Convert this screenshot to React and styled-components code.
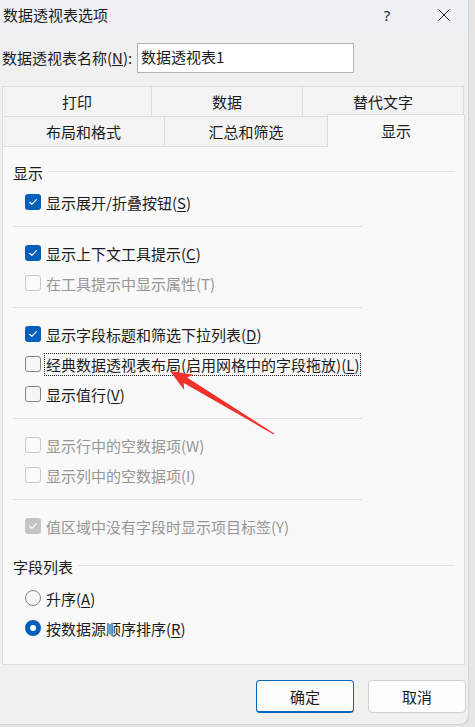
import React from "react";
import styled, { createGlobalStyle, css } from "styled-components";

const Global = createGlobalStyle`
  html, body { margin: 0; padding: 0; }
  body {
    background: #e6e6e6;
    font-family: "Noto Sans CJK SC", "Noto Sans", sans-serif;
    color: #1b1b1b;
  }
  #root { width: 475px; height: 727px; overflow: hidden; }
`;

const Window = styled.div`
  position: relative;
  width: 468px;
  height: 724px;
  background: #f0f0f0;
  border-radius: 0 0 8px 0;
  box-shadow: 0 0 2px rgba(0, 0, 0, 0.28);
  display: flex;
  flex-direction: column;
  overflow: hidden;
`;

const TitleBar = styled.div`
  height: 32px;
  background: #eef2f5;
  display: flex;
  align-items: center;
  padding-left: 3px;
  flex-shrink: 0;
`;

const Title = styled.div`
  font-size: 15px;
  line-height: 20px;
  margin-top: -2px;
`;

const Caption = styled.div`
  width: 46px;
  height: 32px;
  display: flex;
  align-items: center;
  justify-content: center;
  font-size: 15px;
  font-family: "Noto Sans", sans-serif;
  color: #222;
  margin-top: -2px;
  ${(p) => p.$first && css`margin-left: auto;`}
  ${(p) => p.$last && css`margin-left: 11px; margin-right: 1px;`}
`;

const NameRow = styled.div`
  margin-top: 11px;
  height: 30px;
  display: flex;
  align-items: center;
  padding-left: 2px;
`;

const NameLabel = styled.div`
  width: 135px;
  font-size: 15px;
  line-height: 20px;
`;

const NameInput = styled.div`
  box-sizing: border-box;
  width: 217px;
  height: 30px;
  border: 1px solid #b3b3b3;
  background: #ffffff;
  font-size: 15px;
  line-height: 26px;
  padding-left: 3px;
`;

const Tabs = styled.div`
  margin-top: 13px;
  margin-left: 2px;
  display: flex;
  flex-direction: column;
`;

const TabRow = styled.div`
  display: flex;
  height: 30px;
  align-items: flex-end;
`;

const Tab = styled.div`
  box-sizing: border-box;
  width: ${(p) => p.$w}px;
  height: 30px;
  border: 1px solid #dcdcdc;
  border-bottom: none;
  background: #f3f3f3;
  font-size: 15px;
  display: flex;
  align-items: center;
  justify-content: center;
  & + & { margin-left: -1px; }
  ${(p) =>
    p.$active &&
    css`
      height: 33px;
      margin-bottom: -1px;
      background: #f9f9f9;
      position: relative;
      z-index: 1;
      padding-bottom: 2px;
    `}
`;

const Panel = styled.div`
  box-sizing: border-box;
  margin-left: 2px;
  width: 463px;
  height: 519px;
  border: 1px solid #dcdcdc;
  background: #f9f9f9;
  padding-top: 14px;
  display: flex;
  flex-direction: column;
`;

const GroupHeader = styled.div`
  height: 22px;
  display: flex;
  align-items: center;
  padding-left: 10px;
  font-size: 15px;
  ${(p) => p.$spaced && css`margin-top: 14px;`}
  &::after {
    content: "";
    flex: 1;
    height: 1px;
    background: #e0e0e0;
    margin-left: 5px;
    margin-right: 9px;
    margin-top: -2px;
  }
`;

const Options = styled.div`
  margin-top: ${(p) => p.$top}px;
  display: flex;
  flex-direction: column;
`;

const Option = styled.div`
  height: 30px;
  display: flex;
  align-items: center;
  padding-left: 22px;
  color: ${(p) => (p.$disabled ? "#969696" : "#1b1b1b")};
`;

const Box = styled.span`
  box-sizing: border-box;
  width: 16px;
  height: 16px;
  flex-shrink: 0;
  border-radius: ${(p) => (p.$round ? "50%" : "3px")};
  display: flex;
  align-items: center;
  justify-content: center;
  ${(p) => {
    if (p.$checked && p.$disabled)
      return css`background: #c4c4c4; border: none;`;
    if (p.$checked) return css`background: #005fb8; border: none;`;
    if (p.$disabled)
      return css`background: #fbfbfb; border: 1px solid #cacaca;`;
    return css`background: #f6f6f6; border: 1px solid #858585;`;
  }}
`;

const Dot = styled.span`
  width: 6px;
  height: 6px;
  border-radius: 50%;
  background: #fff;
`;

const Text = styled.span`
  margin-left: 3px;
  padding: 0 1px;
  border: 1px dotted ${(p) => (p.$focus ? "#1b1b1b" : "transparent")};
  font-size: 15px;
  line-height: 21px;
  white-space: nowrap;
  u { text-underline-offset: 2px; text-decoration-thickness: 1px; }
`;

const Separator = styled.div`
  height: 1px;
  width: 349px;
  background: #e0e0e0;
  margin: 9px 0 11px 10px;
`;

const Footer = styled.div`
  margin-top: 15px;
  display: flex;
  justify-content: flex-end;
  gap: 14px;
  padding-right: 2px;
`;

const Button = styled.div`
  box-sizing: border-box;
  width: 98px;
  height: 33px;
  border-radius: 4px;
  background: #fdfdfd;
  font-size: 15px;
  display: flex;
  align-items: center;
  justify-content: center;
  border: 1px solid ${(p) => (p.$primary ? "#0067c0" : "#d0d0d0")};
  ${(p) => p.$primary && css`border-bottom-width: 2px; padding-top: 1px;`}
`;

const ArrowLayer = styled.svg`
  position: absolute;
  left: 0;
  top: 0;
  pointer-events: none;
`;

const Check = () => (
  <svg width="12" height="12" viewBox="0 0 12 12">
    <path
      d="M2.6 6.3 L4.9 8.4 L9.4 3.7"
      fill="none"
      stroke="#fff"
      strokeWidth="1.2"
      strokeLinecap="round"
      strokeLinejoin="round"
    />
  </svg>
);

function CheckOption({ checked, disabled, focus, children }) {
  return (
    <Option $disabled={disabled}>
      <Box $checked={checked} $disabled={disabled}>
        {checked && <Check />}
      </Box>
      <Text $focus={focus}>{children}</Text>
    </Option>
  );
}

function RadioOption({ checked, children }) {
  return (
    <Option>
      <Box $round $checked={checked}>
        {checked && <Dot />}
      </Box>
      <Text>{children}</Text>
    </Option>
  );
}

function arrowPoints() {
  const tip = [170, 371];
  const tail = [274, 434];
  const dx = tip[0] - tail[0];
  const dy = tip[1] - tail[1];
  const len = Math.hypot(dx, dy);
  const u = [dx / len, dy / len];
  const n = [-u[1], u[0]];
  const at = (d, w) => [tip[0] - u[0] * d + n[0] * w, tip[1] - u[1] * d + n[1] * w];
  const pts = [
    tip,
    at(22, 9),
    at(18, 3.2),
    [tail[0] + n[0] * 0.5, tail[1] + n[1] * 0.5],
    [tail[0] - n[0] * 0.5, tail[1] - n[1] * 0.5],
    at(18, -3.2),
    at(22, -9),
  ];
  return pts.map((p) => p.map((v) => v.toFixed(1)).join(",")).join(" ");
}

export default function App() {
  return (
    <>
      <Global />
      <Window>
        <TitleBar>
          <Title>数据透视表选项</Title>
          <Caption $first>?</Caption>
          <Caption $last>
            <svg width="12" height="12" viewBox="0 0 12 12">
              <path d="M0.5 0.5 L11.5 11.5 M11.5 0.5 L0.5 11.5" stroke="#222" strokeWidth="1" />
            </svg>
          </Caption>
        </TitleBar>

        <NameRow>
          <NameLabel>
            数据透视表名称(<u>N</u>):
          </NameLabel>
          <NameInput>数据透视表1</NameInput>
        </NameRow>

        <Tabs>
          <TabRow>
            <Tab $w={150}>打印</Tab>
            <Tab $w={152}>数据</Tab>
            <Tab $w={162}>替代文字</Tab>
          </TabRow>
          <TabRow>
            <Tab $w={163}>布局和格式</Tab>
            <Tab $w={164}>汇总和筛选</Tab>
            <Tab $w={138} $active>
              显示
            </Tab>
          </TabRow>
        </Tabs>

        <Panel>
          <GroupHeader>显示</GroupHeader>
          <Options $top={4}>
            <CheckOption checked>
              显示展开/折叠按钮(<u>S</u>)
            </CheckOption>
            <Separator />
            <CheckOption checked>
              显示上下文工具提示(<u>C</u>)
            </CheckOption>
            <CheckOption disabled>在工具提示中显示属性(T)</CheckOption>
            <Separator />
            <CheckOption checked>
              显示字段标题和筛选下拉列表(<u>D</u>)
            </CheckOption>
            <CheckOption focus>
              经典数据透视表布局(启用网格中的字段拖放)(<u>L</u>)
            </CheckOption>
            <CheckOption>
              显示值行(<u>V</u>)
            </CheckOption>
            <Separator />
            <CheckOption disabled>显示行中的空数据项(W)</CheckOption>
            <CheckOption disabled>显示列中的空数据项(I)</CheckOption>
            <Separator />
            <CheckOption disabled checked>
              值区域中没有字段时显示项目标签(Y)
            </CheckOption>
          </Options>

          <GroupHeader $spaced>字段列表</GroupHeader>
          <Options $top={6}>
            <RadioOption>
              升序(<u>A</u>)
            </RadioOption>
            <RadioOption checked>
              按数据源顺序排序(<u>R</u>)
            </RadioOption>
          </Options>
        </Panel>

        <Footer>
          <Button $primary>确定</Button>
          <Button>取消</Button>
        </Footer>

        <ArrowLayer width="468" height="724" viewBox="0 0 468 724">
          <polygon points={arrowPoints()} fill="#f0322b" />
        </ArrowLayer>
      </Window>
    </>
  );
}
